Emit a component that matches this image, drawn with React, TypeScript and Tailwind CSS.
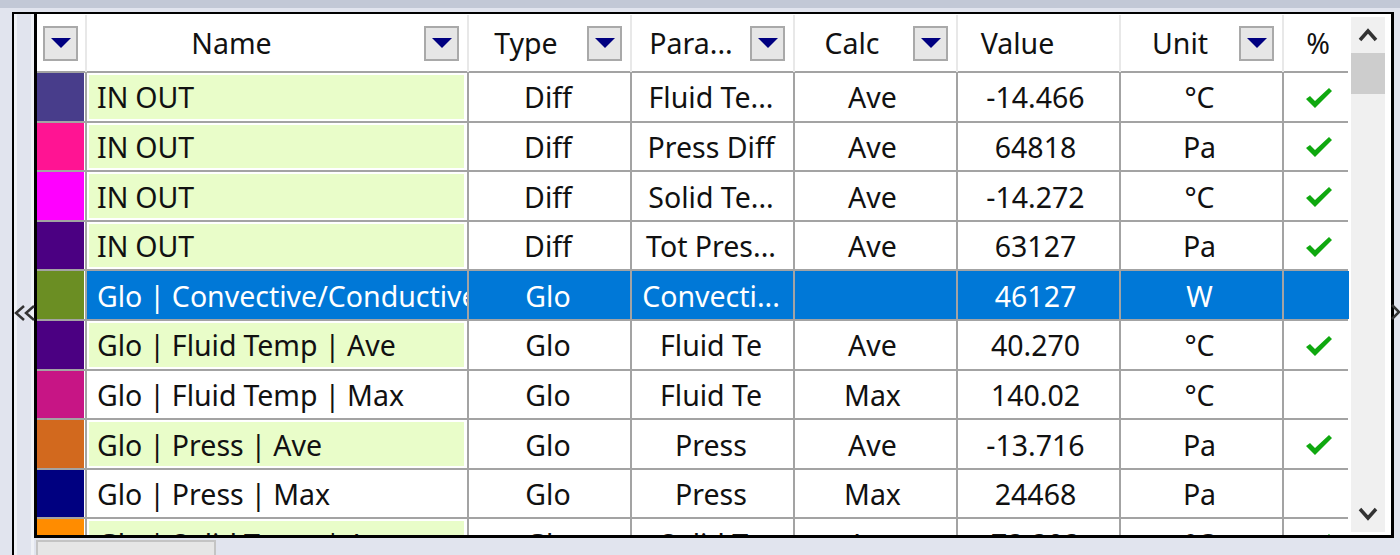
import { ReactNode } from "react";

type Row = {
  color: string;
  name: string;
  type: string;
  para: string;
  calc: string;
  value: string;
  unit: string;
  checked: boolean;
  selected?: boolean;
};

const rows: Row[] = [
  { color: "#483d8b", name: "IN OUT", type: "Diff", para: "Fluid Te...", calc: "Ave", value: "-14.466", unit: "°C", checked: true },
  { color: "#ff1493", name: "IN OUT", type: "Diff", para: "Press Diff", calc: "Ave", value: "64818", unit: "Pa", checked: true },
  { color: "#ff00ff", name: "IN OUT", type: "Diff", para: "Solid Te...", calc: "Ave", value: "-14.272", unit: "°C", checked: true },
  { color: "#4b0082", name: "IN OUT", type: "Diff", para: "Tot Pres...", calc: "Ave", value: "63127", unit: "Pa", checked: true },
  { color: "#6b8e23", name: "Glo | Convective/Conductive", type: "Glo", para: "Convecti...", calc: "", value: "46127", unit: "W", checked: false, selected: true },
  { color: "#4b0082", name: "Glo | Fluid Temp | Ave", type: "Glo", para: "Fluid Te", calc: "Ave", value: "40.270", unit: "°C", checked: true },
  { color: "#c71585", name: "Glo | Fluid Temp | Max", type: "Glo", para: "Fluid Te", calc: "Max", value: "140.02", unit: "°C", checked: false },
  { color: "#d2691e", name: "Glo | Press | Ave", type: "Glo", para: "Press", calc: "Ave", value: "-13.716", unit: "Pa", checked: true },
  { color: "#000080", name: "Glo | Press | Max", type: "Glo", para: "Press", calc: "Max", value: "24468", unit: "Pa", checked: false },
  { color: "#ff8c00", name: "Glo | Solid Temp | Ave", type: "Glo", para: "Solid Te", calc: "Ave", value: "73.303", unit: "°C", checked: true },
];

const columns = "grid grid-cols-[50px_382px_163px_163px_163px_163px_163px_65px]";

function FilterButton() {
  return (
    <span className="flex h-[35px] w-[35px] shrink-0 items-center justify-center border-2 border-[#a9a9a9] bg-[#e6e6e6]">
      <svg width="20" height="10" viewBox="0 0 20 10">
        <path d="M0 0h20L10 10z" fill="#000080" />
      </svg>
    </span>
  );
}

function HeaderCell({ label, filter = true, spacer = "", last = false }: { label: string; filter?: boolean; spacer?: string; last?: boolean }) {
  return (
    <div className={`flex h-[57px] items-center pb-[1px] ${last ? "" : "border-r-2 border-[#e8e8e8]"} ${filter ? "pr-[8px]" : ""}`}>
      <span className={`flex-1 text-center ${spacer}`}>{label}</span>
      {filter && <FilterButton />}
    </div>
  );
}

function Check() {
  return (
    <svg width="28" height="22" viewBox="0 0 28 22">
      <path d="M1 12l4-3 5 5L24 1l3 3-17 17z" fill="#0fa80f" />
    </svg>
  );
}

function Cell({ children, border = true, selected, extra = "pr-[3px]" }: { children?: ReactNode; border?: boolean; selected?: boolean; extra?: string }) {
  return (
    <div className={`flex h-full items-center justify-center overflow-hidden whitespace-nowrap pt-[2px] ${extra} ${border ? "border-r-2 border-[#a3a3a3]" : ""} ${selected ? "bg-[#0078d7]" : ""}`}>
      {children}
    </div>
  );
}

export default function App() {
  return (
    <div className="relative flex h-[555px] w-[1400px] flex-col overflow-hidden bg-[#e1e4ee] font-['Noto_Sans',sans-serif] text-[28.5px] text-[#111]">
      <div className="h-2 shrink-0 bg-[#c2c8d6]" />
      <div className="ml-3 mr-[6px] mt-1 flex h-[543px] border-l-2 border-t-2 border-black">
        <div className="relative w-5 shrink-0 border-x-[3px] border-[#f0f2f7] bg-[#e1e4ee]">
          <svg className="absolute left-[-3px] top-[290px]" width="24" height="18" viewBox="0 0 24 18" fill="none" stroke="#333" strokeWidth="2.5">
            <path d="M10 2L2 9l8 7M20 2l-8 7 8 7" />
          </svg>
        </div>
        <div className="flex w-[1360px] flex-col">
          <div className="flex h-[524px] border-x-[3px] border-b-[3px] border-black bg-white">
            <div className="min-w-0 flex-1 overflow-hidden">
              <div className={`${columns} h-[59px] w-[1311px] items-start border-b-2 border-[#a3a3a3] bg-white pt-[1px]`}>
                <div className="flex h-[57px] items-center border-r-2 border-[#e8e8e8] pb-[1px] pl-[6px]">
                  <FilterButton />
                </div>
                <HeaderCell label="Name" spacer="pr-[48px]" />
                <HeaderCell label="Type" spacer="pr-[4px]" />
                <HeaderCell label="Para..." />
                <HeaderCell label="Calc" spacer="pr-[4px]" />
                <HeaderCell label="Value" filter={false} spacer="pr-[42px]" />
                <HeaderCell label="Unit" />
                <HeaderCell label="%" filter={false} last spacer="pl-[3px]" />
              </div>
              {rows.map((row, i) => (
                <div key={i} className={`${columns} h-[49.6px] w-[1311px] border-b-2 border-[#a3a3a3] ${row.selected ? "bg-[#0078d7] text-white" : ""}`}>
                  <div className="h-full border-r-2 border-[#a3a3a3] bg-white">
                    <div className="h-full w-[47px]" style={{ backgroundColor: row.color }} />
                  </div>
                  <div className={`flex h-full items-center overflow-hidden whitespace-nowrap border-r-2 border-[#a3a3a3] [word-spacing:-0.5px] ${row.selected ? "" : "py-[2px] pl-[2px] pr-[3px]"}`}>
                    <div className={`flex h-full w-full items-center pt-[2px] ${row.selected ? "pl-[10px]" : "pl-[8px]"} ${row.checked ? "bg-[#e9fdc9]" : ""}`}>
                      {row.name}
                    </div>
                  </div>
                  <Cell selected={row.selected}>{row.type}</Cell>
                  <Cell selected={row.selected}>{row.para}</Cell>
                  <Cell selected={row.selected} extra="pr-[6px]">{row.calc}</Cell>
                  <Cell selected={row.selected} extra="pr-[6px]">{row.value}</Cell>
                  <Cell selected={row.selected} extra="pr-[4px]">{row.unit}</Cell>
                  <Cell border={false} selected={row.selected} extra="pl-[4px]">{row.checked && <Check />}</Cell>
                </div>
              ))}
            </div>
            <div className="w-[40px] shrink-0 py-[3px] pr-[6px]">
              <div className="flex h-full flex-col bg-[#f0f0f0]">
                <div className="flex h-[36px] w-full items-center justify-center">
                  <svg width="20" height="14" viewBox="0 0 20 14" fill="none" stroke="#333" strokeWidth="3.5">
                    <path d="M2 12l8-9 8 9" />
                  </svg>
                </div>
                <div className="h-[41px] w-full bg-[#cdcdcd]" />
                <div className="flex-1" />
                <div className="flex h-[36px] w-full items-center justify-center">
                  <svg width="20" height="14" viewBox="0 0 20 14" fill="none" stroke="#333" strokeWidth="3.5">
                    <path d="M2 2l8 9 8-9" />
                  </svg>
                </div>
              </div>
            </div>
          </div>
          <div className="h-[17px] pl-[2px] pt-[2px]">
            <div className="h-full w-[180px] border-2 border-b-0 border-[#c4c4c4] bg-[#e6e6e6]" />
          </div>
        </div>
      </div>
      <svg className="absolute left-[1391px] top-[303px]" width="9" height="18" viewBox="0 0 9 18" fill="none" stroke="#333" strokeWidth="2.5">
        <path d="M1 2l7 7-7 7" />
      </svg>
    </div>
  );
}
